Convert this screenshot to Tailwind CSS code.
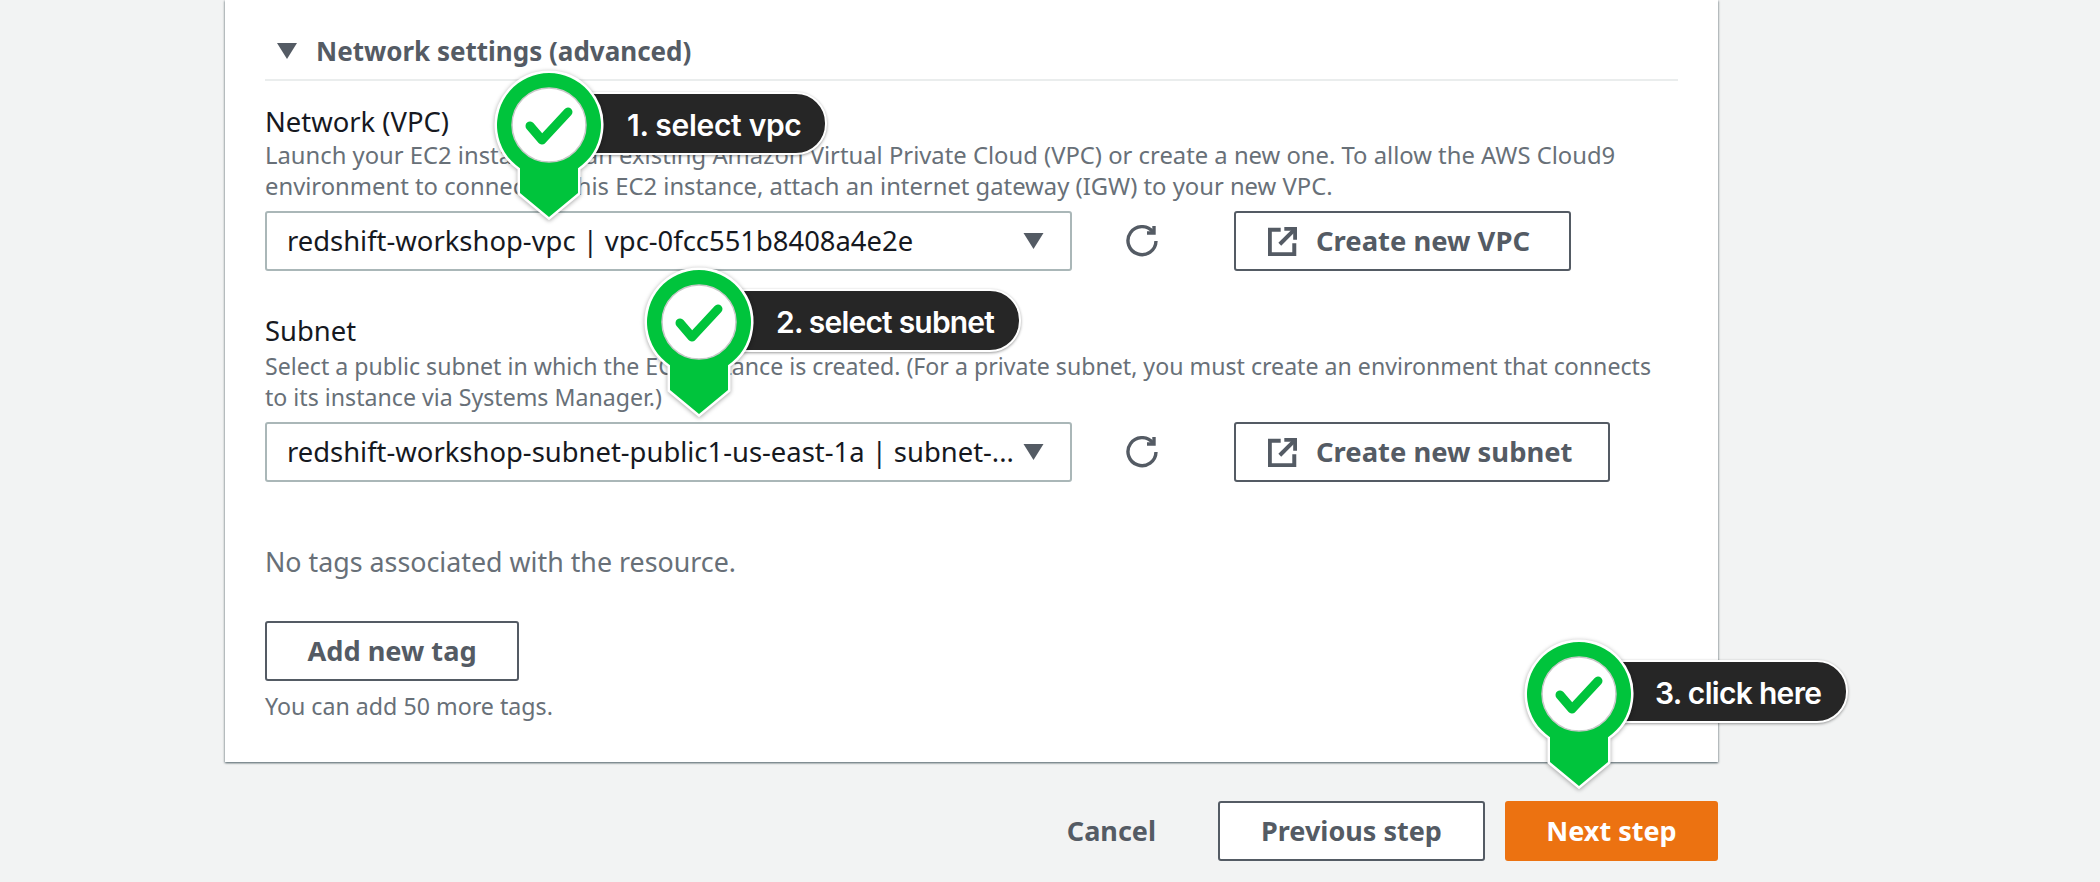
<!DOCTYPE html>
<html lang="en">
<head>
    <meta charset="UTF-8">
    <title>Network settings</title>
    <script src="https://cdn.jsdelivr.net/npm/@tailwindcss/browser@4"></script>
</head>
<body class="relative w-[2100px] h-[882px] overflow-hidden bg-[#f2f3f3] font-['Noto_Sans',sans-serif] text-[#16191f]">
    <!-- Card -->
    <div class="ml-[225px] w-[1493px] h-[762px] bg-white px-[40px] pt-[34px] shadow-[0_1px_2px_rgba(0,28,36,0.5),1px_1px_2px_rgba(0,28,36,0.15),-1px_1px_2px_rgba(0,28,36,0.15)]">
        <!-- Section header -->
        <div class="flex items-center h-[34px] pl-[12px] gap-[19px]">
            <svg width="20" height="16" viewBox="0 0 20 16"><path d="M0 0H20L10 16Z" fill="#545b64"/></svg>
            <h2 class="text-[26px] font-bold text-[#545b64] whitespace-nowrap">Network settings (advanced)</h2>
        </div>
        <div class="mt-[11px] h-[2px] bg-[#eaeded]"></div>

        <!-- VPC -->
        <div class="mt-[25px] text-[27.4px] leading-[32px]">Network (VPC)</div>
        <p class="mt-[2px] text-[23.8px] leading-[31px] text-[#687078] whitespace-nowrap">Launch your EC2 instance in an existing Amazon Virtual Private Cloud (VPC) or create a new one. To allow the AWS Cloud9<br>environment to connect to this EC2 instance, attach an internet gateway (IGW) to your new VPC.</p>
        <div class="mt-[9px] flex items-center h-[60px]">
            <div class="flex items-center justify-between w-[807px] h-[60px] pl-[20px] pr-[26px] border-2 border-[#aab7b8] rounded-[3px] text-[27.4px] whitespace-nowrap">
                <span>redshift-workshop-vpc | vpc-0fcc551b8408a4e2e</span>
                <svg width="21" height="16" viewBox="0 0 20 16"><path d="M0 0H20L10 16Z" fill="#545b64"/></svg>
            </div>
            <svg class="ml-[54px]" width="32" height="32" viewBox="0 0 16 16" fill="none" stroke="#545b64" stroke-width="1.7"><path d="M13.5 3.5A7 7 0 1 0 15 8"/><path d="M14 .5V4H10.5"/></svg>
            <button class="ml-[76px] flex items-center h-[60px] w-[337px] pl-[32px] gap-[19px] bg-white border-2 border-[#545b64] rounded-[3px] text-[27.4px] font-bold text-[#545b64] whitespace-nowrap">
                <svg width="29" height="29" viewBox="0 0 16 16" fill="none" stroke="#545b64" stroke-width="2.2"><path d="M7 1.5H1V15H14.5V9"/><path d="M9 1H15V7"/><path d="M15 1L6.5 9.5"/></svg>
                Create new VPC
            </button>
        </div>

        <!-- Subnet -->
        <div class="mt-[44px] text-[27.4px] leading-[32px]">Subnet</div>
        <p class="mt-[4px] text-[23.15px] leading-[31px] text-[#687078] whitespace-nowrap">Select a public subnet in which the EC2 instance is created. (For a private subnet, you must create an environment that connects<br>to its instance via Systems Manager.)</p>
        <div class="mt-[9px] flex items-center h-[60px]">
            <div class="flex items-center justify-between w-[807px] h-[60px] pl-[20px] pr-[26px] border-2 border-[#aab7b8] rounded-[3px] text-[27.4px] whitespace-nowrap">
                <span>redshift-workshop-subnet-public1-us-east-1a | subnet-...</span>
                <svg width="21" height="16" viewBox="0 0 20 16"><path d="M0 0H20L10 16Z" fill="#545b64"/></svg>
            </div>
            <svg class="ml-[54px]" width="32" height="32" viewBox="0 0 16 16" fill="none" stroke="#545b64" stroke-width="1.7"><path d="M13.5 3.5A7 7 0 1 0 15 8"/><path d="M14 .5V4H10.5"/></svg>
            <button class="ml-[76px] flex items-center h-[60px] w-[376px] pl-[32px] gap-[19px] bg-white border-2 border-[#545b64] rounded-[3px] text-[27.4px] font-bold text-[#545b64] whitespace-nowrap">
                <svg width="29" height="29" viewBox="0 0 16 16" fill="none" stroke="#545b64" stroke-width="2.2"><path d="M7 1.5H1V15H14.5V9"/><path d="M9 1H15V7"/><path d="M15 1L6.5 9.5"/></svg>
                Create new subnet
            </button>
        </div>

        <!-- Tags -->
        <p class="mt-[64px] text-[26.8px] leading-[32px] text-[#687078]">No tags associated with the resource.</p>
        <button class="mt-[43px] block h-[60px] w-[254px] bg-white border-2 border-[#545b64] rounded-[3px] text-[27.2px] font-bold text-[#545b64]">Add new tag</button>
        <p class="mt-[10px] text-[23.2px] leading-[30px] text-[#687078]">You can add 50 more tags.</p>
    </div>

    <!-- Footer actions -->
    <div class="mt-[39px] ml-[225px] w-[1493px] flex items-center justify-end text-[27px] font-bold">
        <span class="mr-[62px] text-[#545b64]">Cancel</span>
        <button class="h-[60px] w-[267px] mr-[20px] bg-white border-2 border-[#545b64] rounded-[3px] text-[#545b64]">Previous step</button>
        <button class="h-[60px] w-[213px] bg-[#ec7211] rounded-[3px] text-white">Next step</button>
    </div>

    <!-- Callout 1 -->
    <div class="absolute left-[489px] top-[65px] w-[120px] h-[160px]">
        <div class="absolute left-[60px] top-[27px] w-[278px] h-[63px] pl-[76px] pt-[3px] flex items-center bg-[#262626] border-2 border-white rounded-r-[31px] shadow-[0_1px_3px_rgba(0,0,0,0.4)] text-white text-[30px] font-['Inter',sans-serif] font-semibold tracking-[-0.3px] whitespace-nowrap">1. select vpc</div>
        <svg class="absolute left-0 top-0 drop-shadow-[0_1px_2px_rgba(0,0,0,0.35)]" width="120" height="160" viewBox="0 0 120 160">
            <path d="M31 103.2A52 52 0 1 1 89 103.2V128L60 152L31 128Z" fill="#00c43c" stroke="white" stroke-width="5" paint-order="stroke"/>
            <circle cx="60" cy="60" r="37" fill="white" stroke="#c8c8c8" stroke-width="1.5"/>
            <path d="M41 61L53 75L79 47" fill="none" stroke="#00c43c" stroke-width="9" stroke-linecap="round" stroke-linejoin="round"/>
        </svg>
    </div>

    <!-- Callout 2 -->
    <div class="absolute left-[639px] top-[262px] w-[120px] h-[160px]">
        <div class="absolute left-[60px] top-[27px] w-[322px] h-[63px] pl-[75px] pt-[3px] flex items-center bg-[#262626] border-2 border-white rounded-r-[31px] shadow-[0_1px_3px_rgba(0,0,0,0.4)] text-white text-[30px] font-['Inter',sans-serif] font-semibold tracking-[-0.8px] whitespace-nowrap">2. select subnet</div>
        <svg class="absolute left-0 top-0 drop-shadow-[0_1px_2px_rgba(0,0,0,0.35)]" width="120" height="160" viewBox="0 0 120 160">
            <path d="M31 103.2A52 52 0 1 1 89 103.2V128L60 152L31 128Z" fill="#00c43c" stroke="white" stroke-width="5" paint-order="stroke"/>
            <circle cx="60" cy="60" r="37" fill="white" stroke="#c8c8c8" stroke-width="1.5"/>
            <path d="M41 61L53 75L79 47" fill="none" stroke="#00c43c" stroke-width="9" stroke-linecap="round" stroke-linejoin="round"/>
        </svg>
    </div>

    <!-- Callout 3 -->
    <div class="absolute left-[1519px] top-[634px] w-[120px] h-[160px]">
        <div class="absolute left-[60px] top-[26px] w-[269px] h-[63px] pl-[74px] pt-[3px] flex items-center bg-[#262626] border-2 border-white rounded-r-[31px] shadow-[0_1px_3px_rgba(0,0,0,0.4)] text-white text-[30px] font-['Inter',sans-serif] font-semibold tracking-[-0.7px] whitespace-nowrap">3. click here</div>
        <svg class="absolute left-0 top-0 drop-shadow-[0_1px_2px_rgba(0,0,0,0.35)]" width="120" height="160" viewBox="0 0 120 160">
            <path d="M31 103.2A52 52 0 1 1 89 103.2V128L60 152L31 128Z" fill="#00c43c" stroke="white" stroke-width="5" paint-order="stroke"/>
            <circle cx="60" cy="60" r="37" fill="white" stroke="#c8c8c8" stroke-width="1.5"/>
            <path d="M41 61L53 75L79 47" fill="none" stroke="#00c43c" stroke-width="9" stroke-linecap="round" stroke-linejoin="round"/>
        </svg>
    </div>
</body>
</html>
